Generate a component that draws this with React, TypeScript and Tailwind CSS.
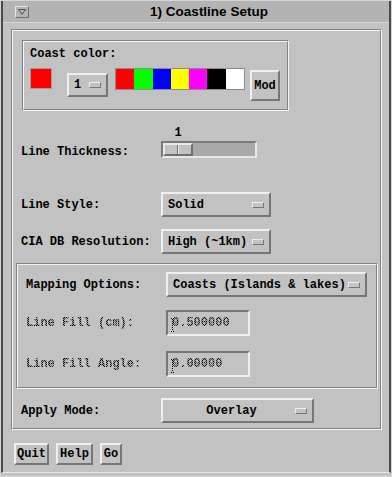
import React from "react";

const raised =
  "border-2 border-t-[#efefef] border-l-[#efefef] border-r-[#767676] border-b-[#767676]";
const sunken =
  "border-2 border-t-[#767676] border-l-[#767676] border-r-[#efefef] border-b-[#efefef]";
const etchOuter =
  "border border-t-[#838383] border-l-[#838383] border-r-[#f4f4f4] border-b-[#f4f4f4]";
const etchInner =
  "border border-t-[#f4f4f4] border-l-[#f4f4f4] border-r-[#838383] border-b-[#838383]";
const stipple =
  "text-transparent bg-clip-text bg-[conic-gradient(#000_25%,#8e8e8e_0_50%,#000_0_75%,#8e8e8e_0)] bg-size-[2px_2px]";

function Etched({ className, children }: { className: string; children?: React.ReactNode }) {
  return (
    <div className={`${etchOuter} ${className}`}>
      <div className={`${etchInner} h-full w-full`}>{children}</div>
    </div>
  );
}

function Indicator() {
  return (
    <div className="w-[12px] h-[6px] shrink-0 border border-t-[#efefef] border-l-[#efefef] border-r-[#767676] border-b-[#767676] bg-[#c2c2c2]" />
  );
}

function OptionMenu({
  label,
  className,
  center,
}: {
  label: string;
  className: string;
  center?: boolean;
}) {
  return (
    <div className={`${raised} ${className} h-[25px] flex items-center pl-[5px] pr-[5px] bg-[#c2c2c2]`}>
      <span className={`flex-1 leading-[14px] whitespace-pre ${center ? "text-center" : "text-left"}`}>
        {label}
      </span>
      <Indicator />
    </div>
  );
}

function Field({ value }: { value: string }) {
  return (
    <div className={`${sunken} relative w-[84px] h-[26px] flex items-center pl-[4px] bg-[#c2c2c2]`}>
      <svg className="absolute left-[3px] top-[6px]" width="5" height="14" viewBox="0 0 5 14">
        <g fill="#000">
          <rect x="0" y="0" width="1" height="1" />
          <rect x="2" y="0" width="1" height="1" />
          <rect x="1" y="1" width="1" height="1" />
          <rect x="1" y="3" width="1" height="1" />
          <rect x="1" y="5" width="1" height="1" />
          <rect x="1" y="7" width="1" height="1" />
          <rect x="1" y="9" width="1" height="1" />
          <rect x="1" y="11" width="1" height="1" />
          <rect x="0" y="13" width="1" height="1" />
          <rect x="2" y="13" width="1" height="1" />
        </g>
      </svg>
      <span className={`${stipple} leading-[14px]`}>{value}</span>
    </div>
  );
}

function PushButton({ label, className }: { label: string; className: string }) {
  return (
    <div className={`${raised} ${className} h-[22px] flex items-center justify-center bg-[#c2c2c2] leading-[14px]`}>
      {label}
    </div>
  );
}

export default function App() {
  const colors = ["#ff0000", "#00ff00", "#0000ff", "#ffff00", "#ff00ff", "#000000", "#ffffff"];
  return (
    <div className="w-[392px] h-[477px] bg-[#c2c2c2] border border-[#d4d4d4] pb-[3px] font-['Liberation_Mono',monospace] text-[12px] font-bold text-black">
      <div className="w-full h-full border-l-2 border-r-2 border-b border-l-[#4a4a4a] border-r-[#4a4a4a] border-b-[#e6e6e6] flex flex-col">
        {/* title bar */}
        <div className="h-[22px] shrink-0 bg-[#b3b3b3] border-b border-[#d6d6d6] flex items-start pl-[12px] pt-[5px]">
          <div className="w-[14px] h-[12px] border border-t-[#e6e6e6] border-l-[#e6e6e6] border-r-[#6e6e6e] border-b-[#6e6e6e] flex items-center justify-center">
            <svg width="8" height="6" viewBox="0 0 8 6">
              <path d="M0.5 0.5 H7.5 L4 5.5 Z" fill="none" stroke="#555" strokeWidth="1" />
            </svg>
          </div>
          <div className="flex-1 text-center font-['Liberation_Sans',Arial,sans-serif] text-[13.5px] font-bold leading-[14px] -mt-[1px]">
            1) Coastline Setup
          </div>
        </div>

        {/* body */}
        <div className="flex-1 pt-[6px] pl-[8px]">
          <Etched className="w-[371px] h-[401px]">
            {/* Coast color frame */}
            <Etched className="ml-[9px] mt-[9px] w-[267px] h-[71px]">
              <div className="pl-[6px] pt-[5px] leading-[14px]">Coast color:</div>
              <div className="flex items-start pl-[6px] mt-[7px]">
                <div className="w-[22px] h-[21px] border border-[#9c9c9c] bg-[#ff0000]" />
                <OptionMenu label="1" className="ml-[15px] mt-[5px] w-[41px] !h-[24px]" />
                <div className="ml-[7px] w-[130px] h-[22px] border border-[#8c8c8c] flex">
                  {colors.map((c) => (
                    <div key={c} className="flex-1 h-full" style={{ backgroundColor: c }} />
                  ))}
                </div>
                <div className={`${raised} ml-[5px] mt-[2px] w-[30px] h-[31px] flex items-center justify-center leading-[14px]`}>
                  Mod
                </div>
              </div>
            </Etched>

            {/* Line thickness */}
            <div className="mt-[15px] ml-[150px] w-[30px] h-[14px] leading-[14px] text-center">1</div>
            <div className="mt-[1px] ml-[8px] flex items-start">
              <div className="w-[140px] pt-[4px] leading-[14px]">Line Thickness:</div>
              <div className="w-[96px] h-[17px] border-2 border-t-[#7a7a7a] border-l-[#7a7a7a] border-r-[#e8e8e8] border-b-[#e8e8e8] bg-[#a9a9a9] flex">
                <div className="w-[30px] h-full border-2 border-t-[#e8e8e8] border-l-[#e8e8e8] border-r-[#707070] border-b-[#707070] bg-[#c2c2c2] flex justify-center">
                  <div className="w-[1px] h-full bg-[#707070]" />
                  <div className="w-[1px] h-full bg-[#efefef]" />
                </div>
              </div>
            </div>

            {/* Line Style */}
            <div className="mt-[33px] ml-[8px] flex items-center">
              <div className="w-[140px] leading-[14px]">Line Style:</div>
              <OptionMenu label="Solid" className="w-[110px]" />
            </div>

            {/* CIA */}
            <div className="mt-[12px] ml-[8px] flex items-center">
              <div className="w-[140px] leading-[14px]">CIA DB Resolution:</div>
              <OptionMenu label="High (~1km)" className="w-[110px]" />
            </div>

            {/* Mapping frame */}
            <Etched className="mt-[9px] ml-[3px] w-[362px] h-[126px]">
              <div className="mt-[7px] pl-[8px] flex items-center">
                <div className="w-[140px] leading-[14px]">Mapping Options:</div>
                <OptionMenu label="Coasts (Islands & lakes)" className="w-[201px]" />
              </div>
              <div className="mt-[13px] pl-[8px] flex items-center">
                <div className="w-[140px] leading-[14px]">
                  <span className={stipple}>Line Fill (cm):</span>
                </div>
                <Field value="0.500000" />
              </div>
              <div className="mt-[15px] pl-[8px] flex items-center">
                <div className="w-[140px] leading-[14px]">
                  <span className={stipple}>Line Fill Angle:</span>
                </div>
                <Field value="0.00000" />
              </div>
            </Etched>

            {/* Apply mode */}
            <div className="mt-[9px] ml-[8px] flex items-center">
              <div className="w-[140px] leading-[14px]">Apply Mode:</div>
              <OptionMenu label="Overlay" className="w-[153px]" center />
            </div>
          </Etched>

          {/* Buttons */}
          <div className="mt-[13px] ml-[3px] flex">
            <PushButton label="Quit" className="w-[35px]" />
            <PushButton label="Help" className="ml-[7px] w-[37px]" />
            <PushButton label="Go" className="ml-[7px] w-[22px]" />
          </div>
        </div>
      </div>
    </div>
  );
}
